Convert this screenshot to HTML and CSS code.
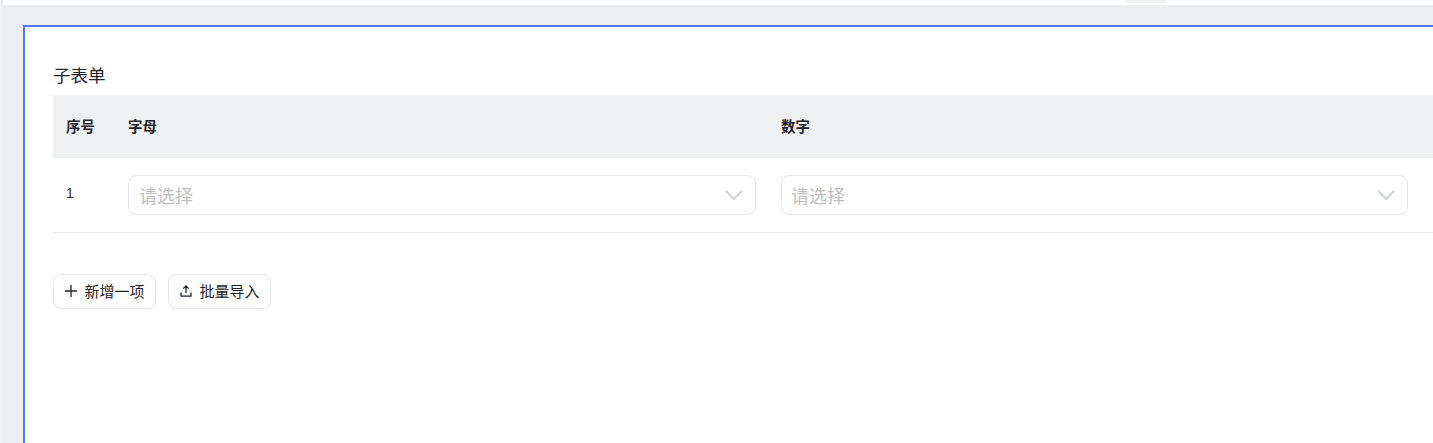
FILE: index.html
```html
<!DOCTYPE html>
<html lang="zh-CN">
<head>
    <meta charset="UTF-8">
    <title>子表单</title>
    <link rel="stylesheet" href="styles.css">
</head>
<body>
<div class="topbar"><span class="top_pill"></span></div>
<div class="panel">
    <div class="form_title">子表单</div>
    <div class="sub_table">
        <div class="row head">
            <div class="col_no">序号</div>
            <div class="col_cell">字母</div>
            <div class="col_cell">数字</div>
        </div>
        <div class="row body_row">
            <div class="col_no num">1</div>
            <div class="col_cell">
                <div class="select">
                    <span>请选择</span>
                    <svg class="arrow" width="18" height="10" viewBox="0 0 18 10"><path d="M1 1l8 8 8-8" fill="none" stroke="#d0d2d6" stroke-width="2"/></svg>
                </div>
            </div>
            <div class="col_cell">
                <div class="select">
                    <span>请选择</span>
                    <svg class="arrow" width="18" height="10" viewBox="0 0 18 10"><path d="M1 1l8 8 8-8" fill="none" stroke="#d0d2d6" stroke-width="2"/></svg>
                </div>
            </div>
        </div>
    </div>
    <div class="btns">
        <div class="btn">
            <svg width="14" height="14" viewBox="0 0 14 14"><path d="M7 1v12M1 7h12" fill="none" stroke="#1f2329" stroke-width="1.3"/></svg>
            <span>新增一项</span>
        </div>
        <div class="btn">
            <svg width="14" height="14" viewBox="0 0 14 14"><path d="M7 9V2.2M4.3 4.6L7 1.9l2.7 2.7M2 8.5v3.7h10V8.5" fill="none" stroke="#1f2329" stroke-width="1.3"/></svg>
            <span>批量导入</span>
        </div>
    </div>
</div>
</body>
</html>
```

FILE: styles.css
```css
* {
    margin: 0;
    padding: 0;
    box-sizing: border-box;
}
html, body {
    height: 100%;
    overflow: hidden;
}
body {
    background: #edeef2;
    border-left: 1px solid #f6f6f8;
    font-family: "Noto Sans CJK SC", "Liberation Sans", sans-serif;
    color: #1f2329;
}
.topbar {
    height: 5px;
    margin-left: 2px;
    background: #fff;
    padding-left: 1123px;
}
.top_pill {
    display: block;
    width: 40px;
    height: 3px;
    background: #f0f0f0;
    border-radius: 0 0 4px 4px;
}
.panel {
    margin: 20px 0 0 22px;
    width: 1410px;
    height: 418px;
    background: #fff;
    border-top: 2px solid #4d79ff;
    border-left: 2px solid #4d79ff;
    padding: 36px 0 0 28px;
}
.form_title {
    height: 32px;
    font-size: 17.5px;
    line-height: 24px;
    color: #1f2329;
}
.row {
    display: flex;
}
.head {
    height: 63px;
    padding-bottom: 2px;
    align-items: center;
    background: #f0f1f3;
    font-size: 14.5px;
    font-weight: 700;
}
.body_row {
    height: 75px;
    padding-top: 17px;
    border-bottom: 1px solid #e8e8ea;
}
.col_no {
    width: 75px;
    padding-left: 13px;
    flex-shrink: 0;
}
.num {
    font-size: 14px;
    line-height: 20px;
    font-family: "Liberation Sans", sans-serif;
    color: #333;
    padding-top: 8px;
}
.col_cell {
    width: 653px;
    padding-right: 25px;
    flex-shrink: 0;
}
.col_cell:last-child {
    padding-right: 26px;
}
.col_cell:last-child .select {
    padding-left: 9px;
}
.select {
    height: 40px;
    border: 1px solid #e5e6e8;
    border-radius: 8px;
    padding: 0 12px 0 10px;
    display: flex;
    align-items: center;
    justify-content: space-between;
    font-size: 18px;
    color: #bfbfbf;
}
.btns {
    display: flex;
    gap: 12px;
    margin-top: 41px;
}
.btn {
    height: 35px;
    width: 103px;
    padding-bottom: 2px;
    border: 1px solid #e5e6e8;
    border-radius: 8px;
    display: flex;
    align-items: center;
    justify-content: center;
    gap: 6px;
    font-size: 15px;
    color: #1f2329;
}
```
